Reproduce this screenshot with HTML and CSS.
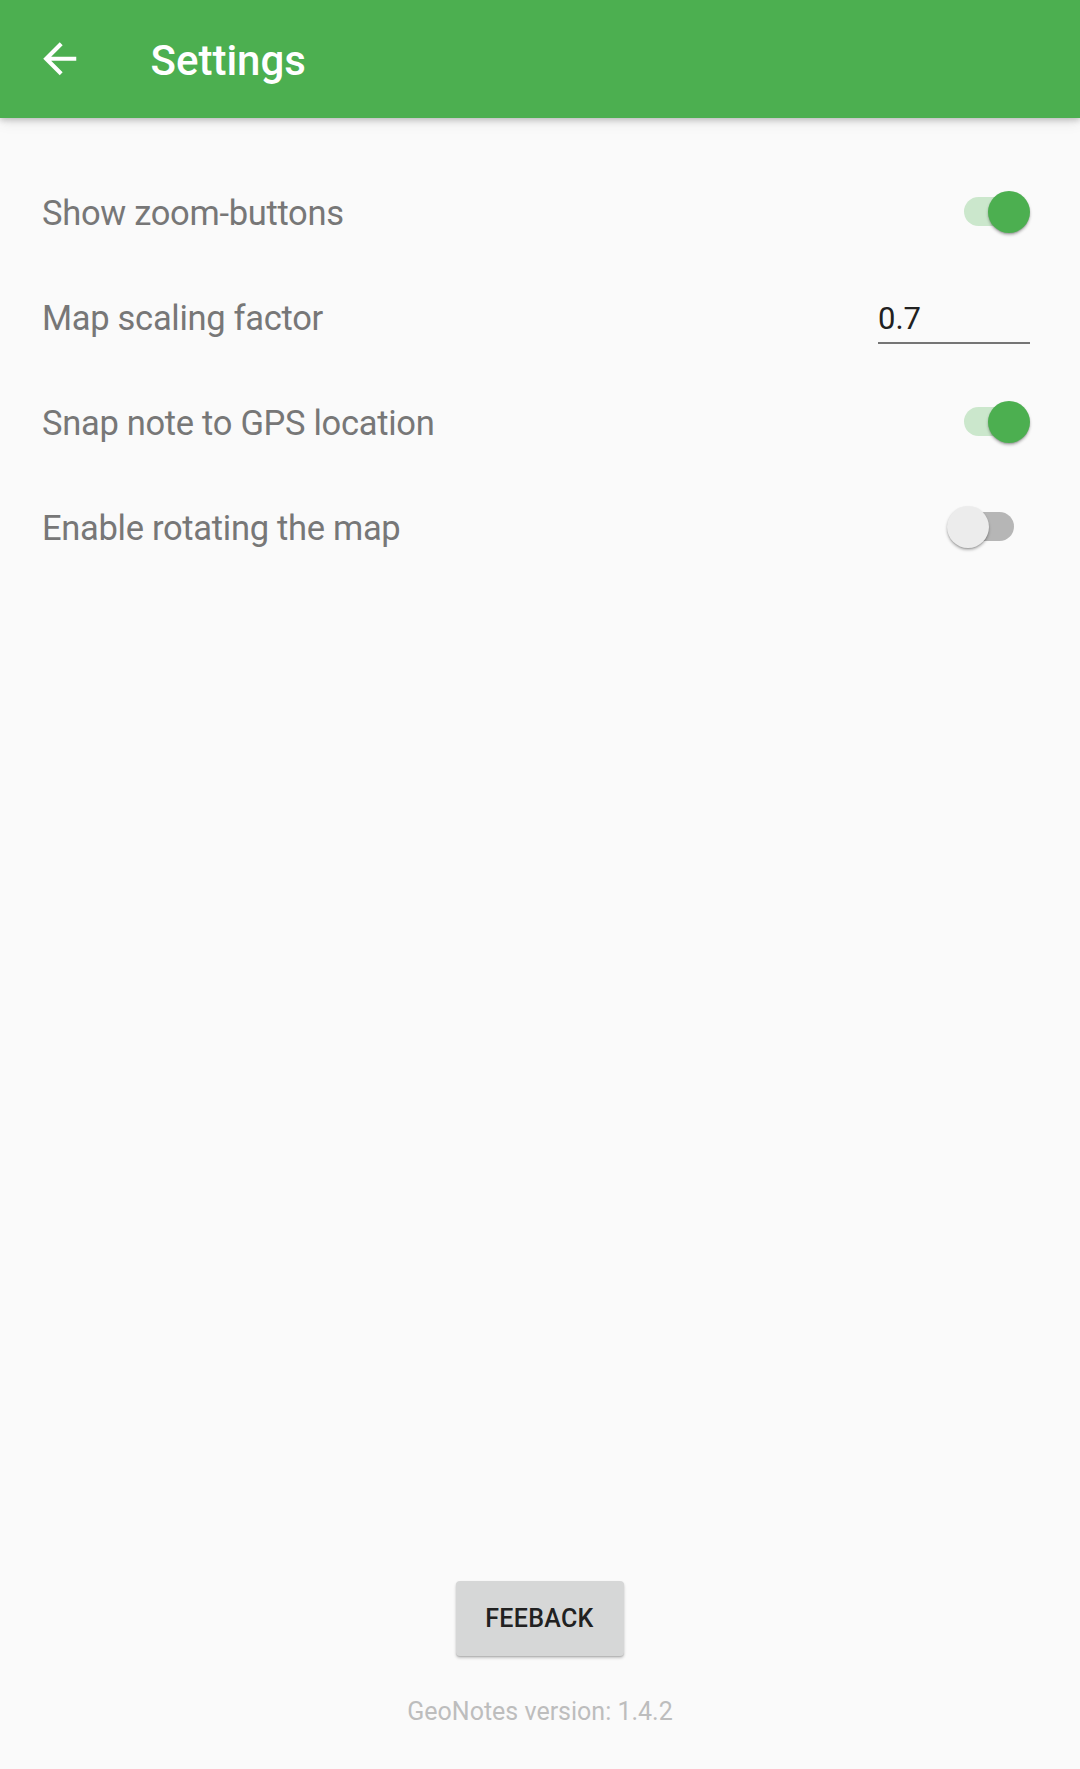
FILE: index.html
```html
<!DOCTYPE html>
<html lang="en">
<head>
<meta charset="utf-8">
<title>Settings</title>
<link rel="stylesheet" href="styles.css">
</head>
<body>
<div class="screen">
  <header class="appbar">
    <svg class="back" viewBox="0 0 24 24" aria-hidden="true"><path d="M20 11H7.83l5.59-5.59L12 4l-8 8 8 8 1.41-1.41L7.83 13H20v-2z" fill="#fff"/></svg>
    <h1 class="title">Settings</h1>
  </header>

  <main class="prefs">
    <div class="row">
      <span class="label">Show zoom-buttons</span>
      <span class="switch on"><span class="track"></span><span class="thumb"></span></span>
    </div>
    <div class="row">
      <span class="label">Map scaling factor</span>
      <div class="field">0.7</div>
    </div>
    <div class="row">
      <span class="label">Snap note to GPS location</span>
      <span class="switch on"><span class="track"></span><span class="thumb"></span></span>
    </div>
    <div class="row">
      <span class="label">Enable rotating the map</span>
      <span class="switch off"><span class="track"></span><span class="thumb"></span></span>
    </div>
  </main>

  <footer class="footer">
    <button class="btn">FEEBACK</button>
    <div class="version">GeoNotes version: 1.4.2</div>
  </footer>
</div>
</body>
</html>
```

FILE: styles.css
```css
html, body {
  margin: 0;
  padding: 0;
}
body {
  background: #FAFAFA;
  font-family: Roboto, "Noto Sans", "Liberation Sans", sans-serif;
}
.screen {
  height: 1769px;
  display: flex;
  flex-direction: column;
}
.appbar {
  height: 118px;
  flex: none;
  background: #4CAF50;
  display: flex;
  align-items: center;
  padding-left: 35px;
  box-shadow: 0 2px 6px rgba(0,0,0,0.22), 0 4px 14px rgba(0,0,0,0.08);
  position: relative;
  z-index: 1;
}
.back {
  width: 49.5px;
  height: 49.5px;
  flex: none;
}
.title {
  margin: 0 0 0 66px;
  padding-top: 3px;
  color: #fff;
  font-size: 42px;
  font-weight: 500;
  line-height: 1;
}
.prefs {
  padding-top: 41px;
  flex: 1;
}
.row {
  height: 105px;
  display: flex;
  align-items: center;
  justify-content: space-between;
  padding: 0 50px 0 42px;
}
.label {
  font-size: 34.5px;
  letter-spacing: -0.3px;
  color: #777777;
  padding-top: 3px;
}
.switch {
  position: relative;
  width: 83px;
  height: 42px;
  flex: none;
}
.track {
  position: absolute;
  left: 17px;
  top: 6.5px;
  width: 50px;
  height: 29px;
  border-radius: 15px;
}
.thumb {
  position: absolute;
  top: 0;
  width: 42px;
  height: 42px;
  border-radius: 50%;
  box-shadow: 0 2px 3px rgba(0,0,0,0.28), 0 1px 1px rgba(0,0,0,0.12);
}
.switch.on .track { background: #CBE7CC; }
.switch.on .thumb { right: 0; background: #4CAF50; }
.switch.off .track { background: #B6B6B6; }
.switch.off .thumb { left: 0; background: #ECECEC; }
.field {
  width: 152px;
  box-sizing: border-box;
  font-size: 31px;
  line-height: 36px;
  color: #212121;
  padding: 10px 0 5px 0;
  border-bottom: 2px solid #757575;
  margin-top: 2px;
}
.footer {
  display: flex;
  flex-direction: column;
  align-items: center;
  padding-bottom: 43px;
}
.btn {
  width: 168px;
  height: 75px;
  border: 0;
  border-radius: 4px;
  background: #D6D7D7;
  color: #212121;
  font-family: Roboto, "Noto Sans", "Liberation Sans", sans-serif;
  font-size: 25px;
  font-weight: 500;
  letter-spacing: 0.3px;
  box-shadow: 0 2px 3px rgba(0,0,0,0.22), 0 1px 1px rgba(0,0,0,0.1);
  padding: 0;
  margin-left: -1px;
}
.version {
  margin-top: 41px;
  font-size: 25px;
  color: #BDBDBD;
}
```
